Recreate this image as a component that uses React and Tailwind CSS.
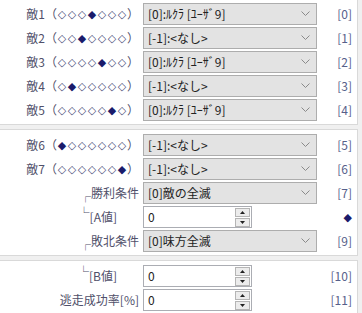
import React from 'react';

const FONT = { fontFamily: '"Noto Sans CJK JP", "Noto Sans", sans-serif' };

const Diamonds = ({ pos }) => (
  <span className="inline-flex font-['DejaVu_Sans'] text-[11px] leading-none">
    {Array.from({ length: 7 }).map((_, i) =>
      i === pos ? (
        <span key={i} className="inline-block w-[10px] text-center text-[#1b1b6b]">◆</span>
      ) : (
        <span key={i} className="inline-block w-[10px] text-center text-[#4a4a78]">◇</span>
      )
    )}
  </span>
);

const Chevron = () => (
  <svg width="9" height="6" viewBox="0 0 9 6" className="shrink-0">
    <polyline points="0.5,0.5 4.5,4.5 8.5,0.5" fill="none" stroke="#8a8a8a" strokeWidth="1" />
  </svg>
);

const Select = ({ value }) => (
  <div className="ml-[4px] flex h-[22px] w-[174px] items-center justify-between border border-[#adadad] bg-[#e3e3e3] pl-[4px] pr-[6px] text-[12px] text-[#222]">
    <span className="whitespace-nowrap">{value}</span>
    <Chevron />
  </div>
);

const Spin = ({ value }) => (
  <div className="ml-[4px] flex h-[22px] w-[109px] items-center justify-between border border-[#abadb3] bg-white pl-[4px] pr-[1px] text-[12px] text-[#222]">
    <span>{value}</span>
    <div className="flex h-[19px] w-[15px] flex-col gap-[1px]">
      <div className="flex flex-1 items-center justify-center border border-[#b5b5b5] bg-[#ececec]">
        <svg width="5" height="3" viewBox="0 0 5 3"><polygon points="2.5,0 5,3 0,3" fill="#222" /></svg>
      </div>
      <div className="flex flex-1 items-center justify-center border border-[#b5b5b5] bg-[#ececec]">
        <svg width="5" height="3" viewBox="0 0 5 3"><polygon points="0,0 5,0 2.5,3" fill="#222" /></svg>
      </div>
    </div>
  </div>
);

const Row = ({ label, control, index }) => (
  <div className="mb-[2px] flex h-[22px] items-center">
    <div className="flex w-[139px] items-center justify-end whitespace-nowrap text-[12px] text-[#50506a]">{label}</div>
    {control}
    <div className="flex-1 pr-[5px] text-right text-[12px] text-[#56608a]">{index}</div>
  </div>
);

const enemyLabel = (n, pos) => (
  <>
    <span>敵{n}（</span>
    <Diamonds pos={pos} />
    <span>）</span>
  </>
);

const CornerTop = ({ text }) => (
  <span>
    <span className="relative top-[3px] text-[11px]">┌</span>
    {text}
  </span>
);

const CornerBottom = ({ text }) => (
  <span className="pr-[22px]">
    <span className="relative -top-[5px] text-[11px]">└</span>
    {text}
  </span>
);

const Panel = ({ children, className = '' }) => (
  <div className={`w-[358px] border-r border-[#d9d9d9] bg-white ${className}`}>{children}</div>
);

const Diamond = () => <span className="font-['DejaVu_Sans'] text-[11px] text-[#1b1b6b]">◆</span>;

export default function App() {
  const hero = '[0]:ﾙｸﾗ [ﾕｰｻﾞ9]';
  const none = '[-1]:<なし>';
  return (
    <div className="h-[313px] w-[362px] overflow-hidden bg-[#f0f0f0]" style={FONT}>
      <Panel className="border-b pt-[3px] pb-[1px]">
        <Row label={enemyLabel(1, 3)} control={<Select value={hero} />} index="[0]" />
        <Row label={enemyLabel(2, 2)} control={<Select value={none} />} index="[1]" />
        <Row label={enemyLabel(3, 4)} control={<Select value={hero} />} index="[2]" />
        <Row label={enemyLabel(4, 1)} control={<Select value={none} />} index="[3]" />
        <Row label={enemyLabel(5, 5)} control={<Select value={hero} />} index="[4]" />
      </Panel>
      <Panel className="mt-[4px] border-t border-b pt-[4px] pb-[1px]">
        <Row label={enemyLabel(6, 0)} control={<Select value={none} />} index="[5]" />
        <Row label={enemyLabel(7, 6)} control={<Select value={none} />} index="[6]" />
        <Row label={<CornerTop text="勝利条件" />} control={<Select value="[0]敵の全滅" />} index="[7]" />
        <Row label={<CornerBottom text="[A値]" />} control={<Spin value="0" />} index={<Diamond />} />
        <Row label={<CornerTop text="敗北条件" />} control={<Select value="[0]味方全滅" />} index="[9]" />
      </Panel>
      <Panel className="mt-[4px] border-t pt-[4px]">
        <Row label={<CornerBottom text="[B値]" />} control={<Spin value="0" />} index="[10]" />
        <Row label="逃走成功率[%]" control={<Spin value="0" />} index="[11]" />
        <Row label="" control={<Spin value="" />} index="" />
      </Panel>
    </div>
  );
}
